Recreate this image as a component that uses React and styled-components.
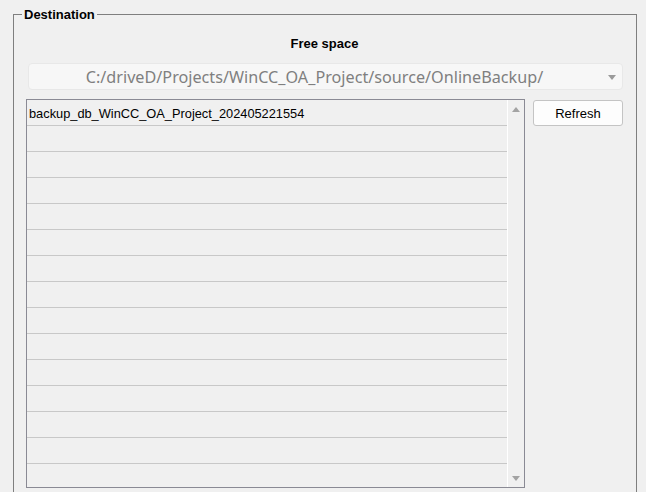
import React from "react";
import styled, { createGlobalStyle } from "styled-components";

const backups = ["backup_db_WinCC_OA_Project_202405221554"];
const ROWS = 15;

const Global = createGlobalStyle`
  html, body {
    margin: 0;
    background: #f0f0f0;
    font-family: "Liberation Sans", Arial, sans-serif;
  }
`;

const Page = styled.div`
  width: 646px;
  height: 492px;
  overflow: hidden;
  padding-top: 7px;
  box-sizing: border-box;
`;

const Group = styled.fieldset`
  margin: 0 9px 0 13px;
  padding: 0 13px 0 12px;
  border: 1px solid #7f7f7f;
  border-radius: 0;
  min-width: 0;
  height: 520px;
`;

const Legend = styled.legend`
  margin-left: -4px;
  padding: 0 2px;
  font-size: 13px;
  font-weight: bold;
  line-height: 15px;
  color: #000;
`;

const Caption = styled.div`
  margin-top: 14px;
  text-align: center;
  font-size: 13px;
  font-weight: bold;
  line-height: 16px;
  color: #000;
`;

const Combo = styled.div`
  margin: 11px 0 0 2px;
  height: 27px;
  box-sizing: border-box;
  border: 1px solid #e8e8e8;
  border-radius: 4px;
  background: #f7f7f7;
  display: flex;
  align-items: center;
`;

const ComboText = styled.span`
  flex: 1;
  text-align: center;
  font-family: "Noto Sans", "Open Sans", sans-serif;
  font-size: 16.2px;
  color: #7f7f7f;
  white-space: nowrap;
`;

const ComboArrow = styled.span`
  width: 0;
  height: 0;
  margin: 2px 6px 0 8px;
  border-left: 4px solid transparent;
  border-right: 4px solid transparent;
  border-top: 5px solid #9a9a9a;
`;

const Body = styled.div`
  margin-top: 9px;
  display: flex;
  align-items: flex-start;
  gap: 8px;
`;

const List = styled.div`
  width: 499px;
  height: 389px;
  box-sizing: border-box;
  border: 1px solid #8a8a94;
  display: flex;
  overflow: hidden;
`;

const Rows = styled.div`
  flex: 1;
`;

const Row = styled.div`
  height: 25px;
  border-bottom: 1px solid #c8c8c8;
  padding-left: 2px;
  font-size: 12.8px;
  line-height: 27px;
  color: #000;
  white-space: nowrap;
`;

const Scroll = styled.div`
  width: 16px;
  border-left: 1px solid #ffffff;
  display: flex;
  flex-direction: column;
  justify-content: space-between;
  align-items: center;
  padding: 7px 0 6px;
`;

const Arrow = styled.span`
  width: 0;
  height: 0;
  border-left: 4px solid transparent;
  border-right: 4px solid transparent;
  ${(p) =>
    p.$up
      ? "border-bottom: 5px solid #a3a3a3;"
      : "border-top: 5px solid #a3a3a3;"}
`;

const Button = styled.button`
  width: 90px;
  height: 26px;
  margin-top: 1px;
  box-sizing: border-box;
  border: 1px solid #c4c4c4;
  border-radius: 3px;
  background: #fdfdfd;
  font-family: "Liberation Sans", Arial, sans-serif;
  font-size: 13px;
  color: #000;
  padding: 1px 0 0;
`;

export default function App() {
  const rows = Array.from({ length: ROWS }, (_, i) => backups[i] || "");
  return (
    <Page>
      <Global />
      <Group>
        <Legend>Destination</Legend>
        <Caption>Free space</Caption>
        <Combo>
          <ComboText>C:/driveD/Projects/WinCC_OA_Project/source/OnlineBackup/</ComboText>
          <ComboArrow />
        </Combo>
        <Body>
          <List>
            <Rows>
              {rows.map((name, i) => (
                <Row key={i}>{name}</Row>
              ))}
            </Rows>
            <Scroll>
              <Arrow $up />
              <Arrow />
            </Scroll>
          </List>
          <Button>Refresh</Button>
        </Body>
      </Group>
    </Page>
  );
}
